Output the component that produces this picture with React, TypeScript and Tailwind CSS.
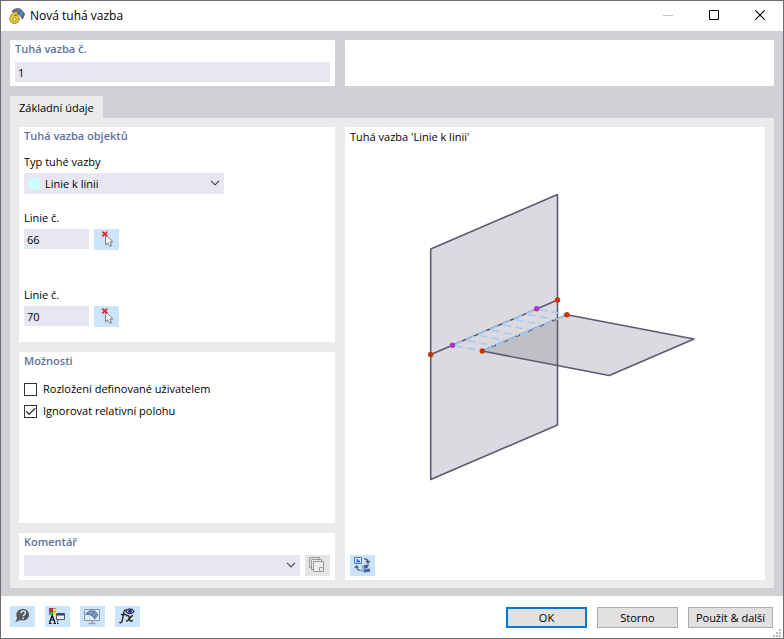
import type { ReactNode } from "react";

function Heading({ children, htmlFor }: { children: ReactNode; htmlFor?: string }) {
  const cls = "block h-[18px] text-[11px] leading-[18px] font-semibold text-[#5f709c]";
  return htmlFor ? (
    <label htmlFor={htmlFor} className={cls}>{children}</label>
  ) : (
    <h2 className={cls}>{children}</h2>
  );
}

function ToolButton({ label, children, muted }: { label: string; children: ReactNode; muted?: boolean }) {
  return (
    <button
      type="button"
      aria-label={label}
      className={`flex h-[21px] w-[25px] shrink-0 items-center justify-center ${muted ? "bg-[#e5e5e5]" : "bg-[#cbe4f9]"}`}
    >
      {children}
    </button>
  );
}

function Chevron() {
  return (
    <svg viewBox="0 0 10 6" className="pointer-events-none absolute top-[7px] right-1 h-[6px] w-[10px]" fill="none" stroke="#4b4b52" strokeWidth="1.2">
      <path d="M1 .8 5 4.800 9 .8" />
    </svg>
  );
}

function AppLogo() {
  return (
    <svg viewBox="0 0 16 16" className="h-4 w-4">
      <path d="M3 3.500C5 .5 9.500-.3 12 1.500l3.600 4.300-2.100 5.400C12.500 8 8 5.500 3 3.500Z" fill="#4468a0" stroke="#555d6c" strokeWidth=".8" />
      <path d="M5.500 3 12 8M8 1.500l6 5.500M10 1 7.500 5M13.500 3.500 11 8" stroke="#8ba7d3" strokeWidth=".6" fill="none" />
      <path d="M8.500 3.500C4.200 3.700.9 7 .9 11c0 2.600 1.900 4.400 4.500 4.400 2.800 0 4.900-1.800 4.900-4.500 0-2.100-1.400-3.500-3.400-3.500-.8 0-1.500.2-2 .6.700-1.100 2-1.900 4-2Z" fill="#f4cb2d" stroke="#6b5a1c" strokeWidth=".7" />
      <ellipse cx="5.600" cy="11.300" rx="1.700" ry="1.600" fill="#fff" stroke="#6b5a1c" strokeWidth=".7" />
    </svg>
  );
}

function PickIcon() {
  return (
    <svg viewBox="0 0 25 21" className="h-[21px] w-[25px]">
      <path d="M12.500 6.500v10l2.300-2 1.600 3.200 1.900-.9-1.500-3.100 3-.4Z" fill="#a9b4bd" />
      <path d="M11.500 5.500v10.300l2.300-2.100 1.700 3.500 1.900-.9-1.600-3.300 3-.4Z" fill="#fff" stroke="#7f8388" />
      <path d="m8.300 2.700 5 4.600m0-4.600-5 4.600" stroke="#e3202c" strokeWidth="1.700" />
    </svg>
  );
}

function LineField({ id, value }: { id: string; value: string }) {
  return (
    <div>
      <label htmlFor={id} className="block h-4 leading-4">Linie č.</label>
      <div className="mt-[3px] flex items-start gap-[5px]">
        <input id={id} defaultValue={value} className="h-5 w-[65px] bg-[#e7e7f2] px-[3px] outline-none" />
        <ToolButton label="Vybrat linii"><PickIcon /></ToolButton>
      </div>
    </div>
  );
}

function CheckRow({ label, checked }: { label: string; checked?: boolean }) {
  return (
    <label className="flex h-[22px] items-center gap-[6px]">
      <span className="relative flex">
        <input type="checkbox" defaultChecked={checked} className="peer h-[13px] w-[13px] appearance-none border border-[#333] bg-white" />
        <svg viewBox="0 0 13 13" className="pointer-events-none absolute inset-0 hidden h-[13px] w-[13px] peer-checked:block" fill="none" stroke="#333" strokeWidth="1.300">
          <path d="m2.200 6.300 3 3 6-6" />
        </svg>
      </span>
      {label}
    </label>
  );
}

const LINKS = [0, 1, 2, 3, 4, 5, 6, 7].map((i) => {
  const x = 452.500 + (84.200 * i) / 7;
  const y = 345.300 - (36.500 * i) / 7;
  return { x1: x, y1: y, x2: x + 29.800, y2: y + 5.700 };
});

function Scene() {
  return (
    <svg viewBox="350 147 410 408" className="min-h-0 w-full flex-1" role="img" aria-label="Linie k linii">
      <path d="M431 249 557.500 194.500V425L431 479.500Z" fill="#dbdae0" />
      <path d="M482.300 351 567 314.700 694 339 609.300 375.500Z" fill="#dbdae0" />
      <path d="M482.300 351 557.500 318.800V365.500Z" fill="#bfbfc5" />
      <g fill="none" stroke="#5c5a70" strokeWidth="1.600" strokeLinejoin="round">
        <path d="M430.700 249 557.500 194.500V425L430.700 479.500Z" />
        <path d="M482.300 351 567 314.700 694 339 609.300 375.500Z" />
        <path d="M431 354.500 557.500 300" />
      </g>
      <g stroke="#a6caf0" strokeWidth="1.600">
        {LINKS.map((l) => (
          <line key={l.x1} {...l} strokeDasharray="8 4" strokeDashoffset="-3" />
        ))}
        <path d="M452.500 345.600 536.700 309.100M482.300 351.300 567 315" strokeDasharray="9 4" strokeDashoffset="-2" strokeWidth="1.800" />
      </g>
      <g fill="#cb3300">
        <circle cx="430.700" cy="354.500" r="2.700" />
        <circle cx="557.500" cy="300" r="2.700" />
        <circle cx="482.300" cy="351" r="2.700" />
        <circle cx="567" cy="314.700" r="2.700" />
      </g>
      <g fill="#b032cc">
        <circle cx="452.500" cy="345.300" r="2.700" />
        <circle cx="536.700" cy="308.800" r="2.700" />
      </g>
    </svg>
  );
}

function CopyIcon() {
  return (
    <svg viewBox="0 0 25 21" className="h-[21px] w-[25px]" fill="none" stroke="#9a9a9a">
      <path d="M6.500 12.500h-2v-10h10v2M8.500 14.500h-2v-10h10v2" />
      <path d="M8.500 6.500h10v10h-10z" fill="#ececec" />
      <path d="M14.500 16.500v-4h4" fill="#fff" />
      <path d="m15.500 15.500 2-2" />
    </svg>
  );
}

function SwapViewIcon() {
  return (
    <svg viewBox="0 0 25 21" className="h-[21px] w-[25px]">
      <path d="M4.500 2.500h7v6h-7z" fill="#dfeaff" stroke="#4a78dc" />
      <path d="M6.500 4v3.500h3.500V5.500H8V4Z" fill="#3566d6" />
      <path d="M14 4c2.500-.3 4 .7 4 3.300m-1.800-1.300 1.800 2 1.800-2M10.500 15.500c-3 0-4-1.300-4-4.200m-1.800 1.500 1.800-2 1.800 2" fill="none" stroke="#4d5562" strokeWidth="1.200" />
      <path d="m11.500 11 2-1 5.500-.5-1.500 4-5.500.5Z" fill="#8daede" />
      <path d="m14 10 5-.5-1.500 3.500-3.500.5ZM13.500 14.500l6.500-1v3.300l-6 .7Z" fill="#4b6596" />
      <path d="m10.800 14 2.700.5.500 3-3-1Z" fill="#90add6" />
    </svg>
  );
}

function HelpIcon() {
  return (
    <svg viewBox="0 0 25 21" className="h-[21px] w-[25px]">
      <path d="M13 3c3.500 0 6 2.400 6 5.700S16.500 14.500 13 14.500c-1 0-1.700-.1-2.400-.4L5.200 16.200l2-4.300C6.500 11 6.300 9.900 6.300 8.700 6.300 5.400 9.500 3 13 3Z" fill="#58595b" />
      <path d="M11 7.300c0-1.400.9-2.200 2.200-2.200 1.300 0 2.200.8 2.200 1.900 0 1.500-2.200 1.600-2.200 3.300" fill="none" stroke="#d2e7f8" strokeWidth="1.500" />
      <path d="M12.400 11.400h1.600v1.500h-1.600z" fill="#d2e7f8" />
    </svg>
  );
}

function DisplayIcon() {
  return (
    <svg viewBox="0 0 25 21" className="h-[21px] w-[25px]">
      <path d="M4 2h7v7H4z" fill="#555" />
      <path d="M4.500 2.500h3v3h-3z" fill="#f22" />
      <path d="M8 2.500h3v3H8z" fill="#ff0" />
      <path d="M4.500 6h3v3h-3z" fill="#2c3" />
      <path d="M8 6h3v3H8z" fill="#fe0" />
      <path d="M4.500 16.500 7.200 9.500l2.800 7M5.500 14h3.500M4 17.300h2.500M8.500 17.300H11M12 17.300h1.500M12.500 14.500v1.300" fill="none" stroke="#111" strokeWidth="1.200" />
      <path d="M11.500 7.500h8v6h-8z" fill="#e9eef4" stroke="#555" />
      <path d="M12 7.500h7.500v2H12z" fill="#233ca5" />
    </svg>
  );
}

function MonitorIcon() {
  return (
    <svg viewBox="0 0 25 21" className="h-[21px] w-[25px]">
      <path d="M4.500 3.500h15v11h-15z" fill="#d6eafa" stroke="#8c98a3" />
      <path d="M12 15v2.500M8.500 17.500h7" stroke="#9b9fa3" strokeWidth="1.400" />
      <path d="M5.500 8.500C8 5 11 3.800 13 4.300c2.500.7 4.300 2.700 4.800 5.200l-3.300 3.800C14 10.500 11 8 5.500 8.500Z" fill="#597da9" stroke="#586b84" strokeWidth=".6" />
      <path d="M8 6.500c4 0 6.500 2 8 5M11 4.800c3 .7 5 2.700 6 5.500M12.500 4.500l-2 4M16 6.500l-3 3.500" stroke="#a2bbd8" strokeWidth=".6" fill="none" />
    </svg>
  );
}

function FormulaIcon() {
  return (
    <svg viewBox="0 0 25 21" className="h-[21px] w-[25px]">
      <g fill="none" stroke="#222" strokeLinecap="round">
        <path d="M12 4.500c-1.500-1.200-2.700-.3-3.100 1.700L7.200 14.500c-.4 2-1.300 2.800-2.400 2M6.500 8.500H11" strokeWidth="1.300" />
        <path d="M11.500 9.800c2-1.200 2.300 0 2.800 2.500.5 2.600 1.200 3.700 3 2.200M17.500 9.700c-2.300 0-4 5.700-6 5.300" strokeWidth="1.400" />
      </g>
      <path d="M11 5.500C12.800 2 17 2 19 5.500 17 8.500 12.800 8.500 11 5.500Z" fill="#dedff1" stroke="#24265b" strokeWidth="1.200" />
      <circle cx="15" cy="5.200" r="1.900" fill="#282a76" />
    </svg>
  );
}

const PUSH = "flex h-[21px] items-center justify-center bg-[#e1e1e1] whitespace-nowrap";

export default function App() {
  return (
    <div className="relative flex min-h-screen flex-col border border-[#6d6c70] bg-white font-['Open_Sans','Noto_Sans',sans-serif] text-[11px] text-black">
      <header className="flex h-[30px] items-center pl-2">
        <AppLogo />
        <h1 className="ml-[5px] flex-1 text-[12px]">Nová tuhá vazba</h1>
        <div className="flex h-[28px] self-start">
          <button type="button" aria-label="Minimalizovat" disabled className="flex w-[46px] items-center justify-center">
            <svg viewBox="0 0 10 10" className="h-[10px] w-[10px]"><path d="M0 5.500h10" stroke="#c6c6c6" /></svg>
          </button>
          <button type="button" aria-label="Maximalizovat" className="flex w-[46px] items-center justify-center">
            <svg viewBox="0 0 10 10" className="h-[10px] w-[10px]"><path d="M.5.5h9v9h-9z" fill="none" stroke="#000" /></svg>
          </button>
          <button type="button" aria-label="Zavřít" className="flex w-[46px] items-center justify-center">
            <svg viewBox="0 0 10 10" className="h-[10px] w-[10px]"><path d="m.3.3 9.400 9.400m0-9.400-9.400 9.400" stroke="#000" strokeWidth="1.100" /></svg>
          </button>
        </div>
      </header>

      <main className="flex flex-1 flex-col bg-[#d1d0d5] px-[9px] pt-[9px] pb-2">
        <div className="grid grid-cols-[325px_1fr] gap-[10px]">
          <section className="bg-white px-[5px] pb-1">
            <Heading htmlFor="number">Tuhá vazba č.</Heading>
            <input id="number" defaultValue="1" className="mt-1 block h-5 w-full bg-[#e7e7f2] px-[3px] outline-none" />
          </section>
          <section className="bg-white" />
        </div>

        <div role="tablist" className="mt-[10px] flex">
          <button type="button" role="tab" aria-selected="true" className="h-[22px] bg-[#ebebeb] px-[9px] pt-[3px]">Základní údaje</button>
        </div>

        <div className="grid flex-1 grid-cols-[316px_1fr] gap-[10px] bg-[#ebebeb] px-[9px] pt-[9px] pb-2">
          <div className="flex flex-col gap-[10px]">
            <section className="bg-white px-[5px] pb-[15px]">
              <Heading>Tuhá vazba objektů</Heading>
              <label htmlFor="type" className="mt-[9px] block h-4 leading-4">Typ tuhé vazby</label>
              <div className="relative mt-[3px] w-[200px]">
                <select id="type" className="block h-[21px] w-full appearance-none bg-[#e7e7f2] pt-px pr-5 pl-[21px] outline-none">
                  <option>Linie k linii</option>
                </select>
                <span className="pointer-events-none absolute top-[5px] left-[5px] h-[11px] w-[11px] bg-[#ccffff]" />
                <Chevron />
              </div>
              <div className="mt-4 flex flex-col gap-[37px]">
                <LineField id="line-a" value="66" />
                <LineField id="line-b" value="70" />
              </div>
            </section>

            <section className="flex-1 bg-white px-[5px]">
              <Heading>Možnosti</Heading>
              <div className="mt-2">
                <CheckRow label="Rozložení definované uživatelem" />
                <CheckRow label="Ignorovat relativní polohu" checked />
              </div>
            </section>

            <section className="bg-white px-[5px] pb-1">
              <Heading htmlFor="comment">Komentář</Heading>
              <div className="mt-1 flex gap-[5px]">
                <div className="relative flex-1">
                  <select id="comment" className="block h-[21px] w-full appearance-none bg-[#e7e7f2] px-[3px] outline-none">
                    <option />
                  </select>
                  <Chevron />
                </div>
                <ToolButton label="Uložené komentáře" muted><CopyIcon /></ToolButton>
              </div>
            </section>
          </div>

          <section className="flex flex-col bg-white px-[5px] pb-1">
            <p className="h-5 leading-5">Tuhá vazba 'Linie k linii'</p>
            <Scene />
            <ToolButton label="Přepnout zobrazení"><SwapViewIcon /></ToolButton>
          </section>
        </div>
      </main>

      <footer className="flex h-[42px] items-start justify-between pt-[10px] pr-[10px] pl-[9px]">
        <div className="flex gap-[10px]">
          <ToolButton label="Nápověda"><HelpIcon /></ToolButton>
          <ToolButton label="Zobrazení"><DisplayIcon /></ToolButton>
          <ToolButton label="Grafika"><MonitorIcon /></ToolButton>
          <ToolButton label="Vzorce"><FormulaIcon /></ToolButton>
        </div>
        <div className="mt-px flex gap-[10px]">
          <button type="button" className={`${PUSH} w-[81px] border-2 border-[#0078d7] pt-px`}>OK</button>
          <button type="button" className={`${PUSH} w-[81px] border border-[#adadad] pt-px`}>Storno</button>
          <button type="button" className={`${PUSH} w-[85px] border border-[#adadad] pt-px`}>Použít &amp; další</button>
        </div>
      </footer>
      <svg viewBox="0 0 8 8" className="absolute right-[2px] bottom-[1px] h-2 w-2" fill="#bcbcbc">
        <path d="M6 0h2v2H6zM3 3h2v2H3zM6 3h2v2H6zM0 6h2v2H0zM3 6h2v2H3zM6 6h2v2H6z" />
      </svg>
    </div>
  );
}
